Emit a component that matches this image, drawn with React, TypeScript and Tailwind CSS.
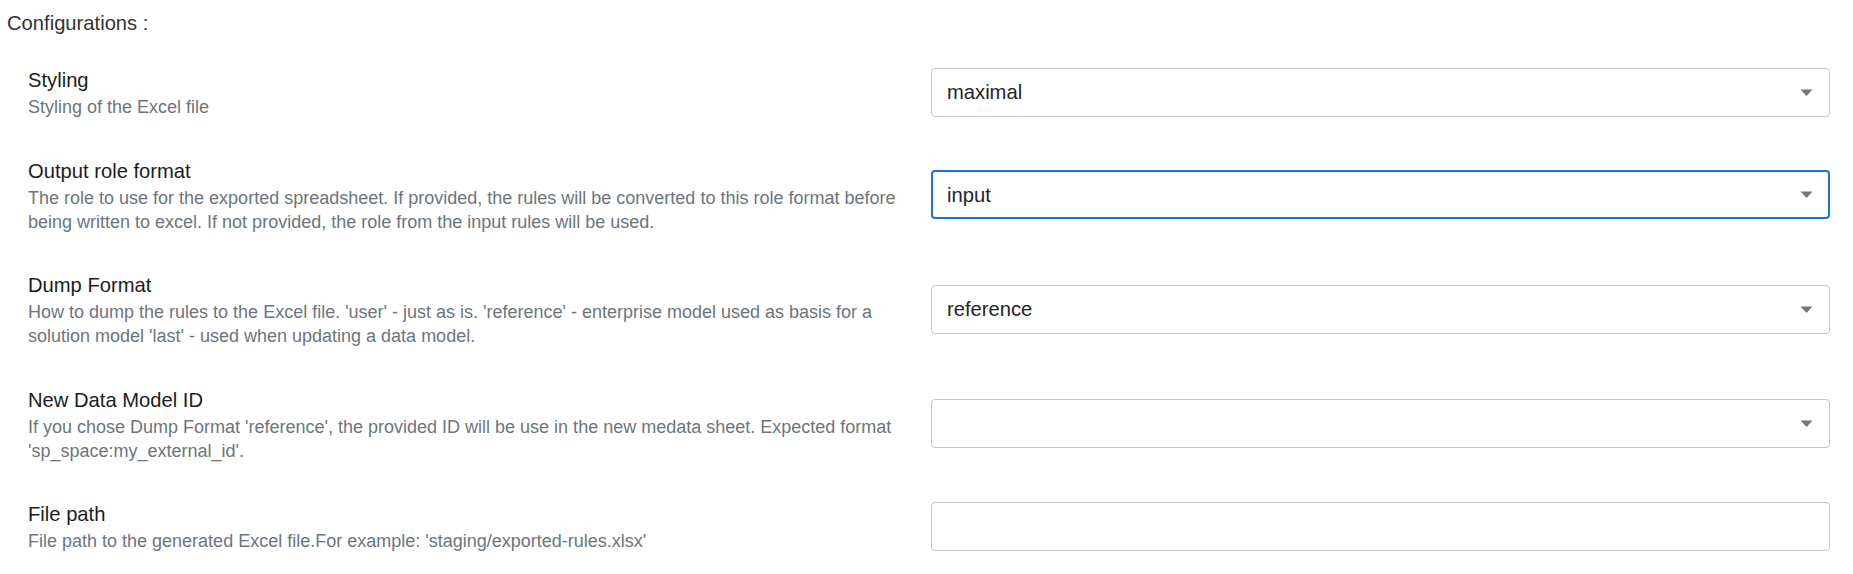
import React from "react";

type Field = {
  label: string;
  desc: string;
  value: string;
  kind: "select" | "input";
  focused?: boolean;
};

const fields: Field[] = [
  { label: "Styling", desc: "Styling of the Excel file", value: "maximal", kind: "select" },
  {
    label: "Output role format",
    desc: "The role to use for the exported spreadsheet. If provided, the rules will be converted to this role format before being written to excel. If not provided, the role from the input rules will be used.",
    value: "input",
    kind: "select",
    focused: true,
  },
  {
    label: "Dump Format",
    desc: "How to dump the rules to the Excel file. 'user' - just as is. 'reference' - enterprise model used as basis for a solution model 'last' - used when updating a data model.",
    value: "reference",
    kind: "select",
  },
  {
    label: "New Data Model ID",
    desc: "If you chose Dump Format 'reference', the provided ID will be use in the new medata sheet. Expected format 'sp_space:my_external_id'.",
    value: "",
    kind: "select",
  },
  {
    label: "File path",
    desc: "File path to the generated Excel file.For example: 'staging/exported-rules.xlsx'",
    value: "",
    kind: "input",
  },
];

function Caret() {
  return (
    <svg width="13" height="7" viewBox="0 0 13 7" className="shrink-0">
      <path d="M0.5 0.5 H12.5 L6.5 7 Z" fill="#767676" />
    </svg>
  );
}

function Control({ f }: { f: Field }) {
  const cls = f.focused
    ? "flex h-[49px] w-full items-center justify-between rounded-[4px] border-2 border-[#1a73d1] bg-white pl-[14px] pr-[15px]"
    : "flex h-[49px] w-full items-center justify-between rounded-[4px] border border-[#c6c6c6] bg-white pl-[15px] pr-[16px]";
  return (
    <div className={cls}>
      <span className="text-[20.2px] leading-[30px] text-[#212529]">{f.value}</span>
      {f.kind === "select" ? <Caret /> : null}
    </div>
  );
}

export default function App() {
  return (
    <div
      className="min-h-[574px] w-full bg-white pl-[7px] pt-[8px]"
      style={{ fontFamily: '"Liberation Sans", Arial, sans-serif' }}
    >
      <div className="text-[20.2px] leading-[30px] text-[#333333]">Configurations :</div>
      <div className="mt-[9px] flex flex-col">
        {fields.map((f) => (
          <div
            key={f.label}
            className="grid grid-cols-2 items-center gap-x-[4px] py-[18.25px] pl-[21px] pr-[23px]"
          >
            <div className="flex flex-col">
              <div className="text-[20.2px] leading-[30px] text-[#1a1d21]">{f.label}</div>
              <div className="text-[18px] leading-[24px] text-[#6c757d]">{f.desc}</div>
            </div>
            <Control f={f} />
          </div>
        ))}
      </div>
    </div>
  );
}
